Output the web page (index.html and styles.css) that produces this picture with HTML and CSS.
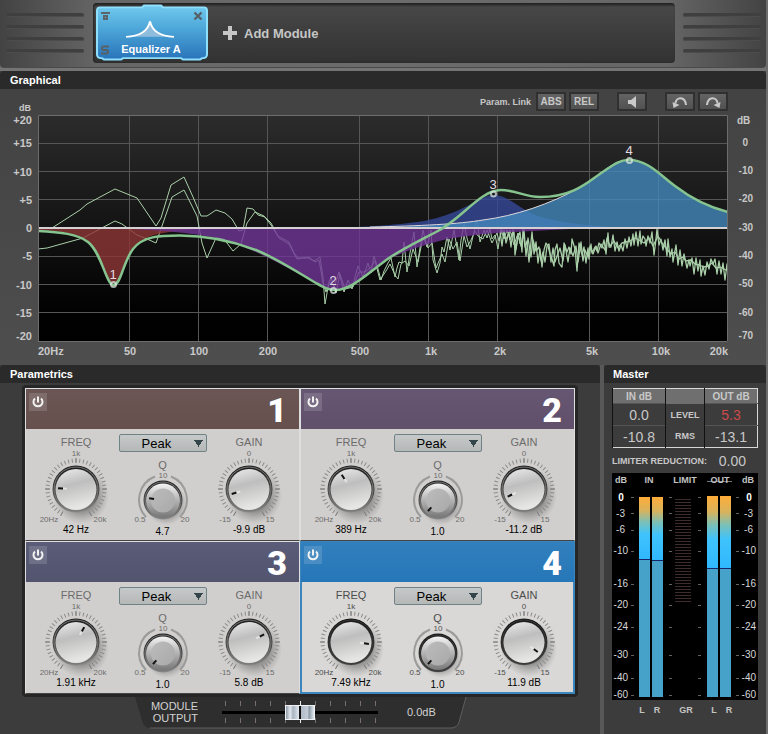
FILE: index.html
```html
<!DOCTYPE html>
<html lang="en">
<head>
<meta charset="utf-8">
<meta name="viewport" content="width=device-width, initial-scale=1">
<title>Equalizer A</title>
<link rel="stylesheet" href="styles.css">
</head>
<body>
<svg class="defs" aria-hidden="true">
  <defs>
    <linearGradient id="capBig" x1="0" y1="0" x2="0.25" y2="1"><stop offset="0" stop-color="#ececec"/><stop offset=".45" stop-color="#bebebe"/><stop offset="1" stop-color="#e6e6e4"/></linearGradient>
    <linearGradient id="ringBig" x1="0" y1="0" x2="0" y2="1"><stop offset="0" stop-color="#1c1c1c"/><stop offset=".6" stop-color="#4a4a4a"/><stop offset="1" stop-color="#8c8c8c"/></linearGradient>
    <linearGradient id="rimSmall" x1="0" y1="0" x2="0" y2="1"><stop offset="0" stop-color="#f4f4f4"/><stop offset=".5" stop-color="#b2b2b2"/><stop offset="1" stop-color="#777"/></linearGradient>
    <linearGradient id="capSmall" x1="0" y1="0" x2="1" y2="1"><stop offset="0" stop-color="#bcbcbc"/><stop offset="1" stop-color="#a9a9a9"/></linearGradient>
    <radialGradient id="shade"><stop offset=".5" stop-color="#555" stop-opacity=".6"/><stop offset="1" stop-color="#777" stop-opacity="0"/></radialGradient>
    <symbol id="dial" viewBox="0 0 80 76">
      <circle cx="45" cy="48" r="28" fill="url(#shade)"/>
      <path d="M25.75 65.68A28.5 28.5 0 1 1 54.25 65.68" fill="none" stroke="#8a8a8a" stroke-width="4" pathLength="300" stroke-dasharray="2 5.5" stroke-dashoffset="1"/>
      <path d="M9 41h5M66 41h5M40 10v5M24.5 68l2.5-4.5M55.5 68l-2.5-4.5" stroke="#7c7c7c"/>
      <circle cx="40" cy="41" r="23.5" fill="url(#ringBig)"/>
      <circle cx="40" cy="41" r="22" fill="none" stroke="#777"/>
      <circle cx="40" cy="41.5" r="20.5" fill="url(#capBig)"/>
    </symbol>
    <symbol id="dialSmall" viewBox="0 0 80 54">
      <circle cx="43" cy="33" r="21" fill="url(#shade)"/>
      <path d="M23 46A25 25 0 0 1 32 5.5M48 5.5A25 25 0 0 1 57 46" fill="none" stroke="#9b9b9b" stroke-width="2"/>
      <circle cx="40" cy="29" r="19.5" fill="url(#ringBig)"/>
      <circle cx="40" cy="29" r="18" fill="none" stroke="#7b7b7b"/>
      <circle cx="40" cy="29.5" r="17" fill="url(#rimSmall)"/>
      <circle cx="40" cy="29.5" r="12" fill="url(#capSmall)"/>
    </symbol>
    <symbol id="power" viewBox="0 0 18 18">
      <path d="M6 5.5a4.500 4.500 0 1 0 6 0M9 3.5v6" fill="none" stroke="#f2f2f2" stroke-width="2"/>
    </symbol>
  </defs>
</svg>

<div class="app">
  <header class="rack">
    <div class="grille"><i></i><i></i><i></i><i></i></div>
    <div class="slots">
      <div class="module">
        <svg class="module-art" viewBox="0 0 114 60" preserveAspectRatio="none" aria-hidden="true">
          <defs><linearGradient id="tile" x1="0" y1="0" x2="0" y2="1"><stop offset="0" stop-color="#72caee"/><stop offset=".4" stop-color="#4fa9da"/><stop offset="1" stop-color="#2873b9"/></linearGradient></defs>
          <path d="M5 3.500H47L49 1.500H66L68 3.500H109Q112 3.500 112 7V52Q112 56 108 56H107L105 57.500H88L86 56H28L26 57.500H9L7 56H6Q2 56 2 52V7Q2 3.500 5 3.500Z" fill="url(#tile)" stroke="#8ee0fc" stroke-width="2"/>
          <path d="M31 34Q51 33 55 18Q59 33 79 34Z" fill="#8ebcdc"/>
          <path d="M31 34Q52 33 55 18Q58 33 79 34" fill="none" stroke="#fff" stroke-width="2"/>
        </svg>
        <button class="mini mini-bypass" aria-label="Bypass"><svg viewBox="0 0 10 10"><path d="M1 1h9v2H1zM3 4h5v5H3zM5 6v1h1V6z" fill="#5b6469" fill-rule="evenodd"/></svg></button>
        <button class="mini mini-close" aria-label="Remove module"><svg viewBox="0 0 10 10"><path d="M1.500 1.500l7 7M8.500 1.500l-7 7" stroke="#566168" stroke-width="2.400"/></svg></button>
        <button class="mini mini-solo" aria-label="Solo"><svg viewBox="0 0 10 10"><path d="M9 1.500H3L2 2.500V4L3 5H7L8 6V7.500L7 8.500H1" fill="none" stroke="#566168" stroke-width="2"/></svg></button>
        <span class="module-name">Equalizer A</span>
      </div>
      <button class="add"><svg viewBox="0 0 14 14" aria-hidden="true"><path d="M5 0h4v5h5v4H9v5H5V9H0V5h5z" fill="#c6c6c6"/></svg>Add Module</button>
    </div>
    <div class="grille"><i></i><i></i><i></i><i></i></div>
  </header>

  <section class="panel graphical">
    <h2>Graphical</h2>
    <div class="toolbar">
      <span class="unit">dB</span>
      <span class="link-label">Param. Link</span>
      <button>ABS</button>
      <button>REL</button>
      <button class="speaker" aria-label="Preview"><svg viewBox="0 0 24 14"><path d="M8 5h3l5-4v12l-5-4H8z" fill="#c9c9c9"/></svg></button>
      <button aria-label="Undo"><svg viewBox="0 0 24 14"><path d="M7.500 8.500C8 1.500 17 1 18 10" fill="none" stroke="#c9c9c9" stroke-width="2"/><path d="M4.500 7l7 3-6 3z" fill="#c9c9c9"/></svg></button>
      <button aria-label="Redo"><svg viewBox="0 0 24 14"><path d="M16.500 8.500C16 1.500 7 1 6 10" fill="none" stroke="#c9c9c9" stroke-width="2"/><path d="M19.500 7l-7 3 6 3z" fill="#c9c9c9"/></svg></button>
    </div>
    <div class="plot">
      <ol class="axis axis-left"><li>+20</li><li>+15</li><li>+10</li><li>+5</li><li>0</li><li>-5</li><li>-10</li><li>-15</li><li>-20</li></ol>
      <svg class="graph" viewBox="38 115 690 227" role="img" aria-label="Equalizer response and spectrum">
        <defs><linearGradient id="screen" x1="0" y1="0" x2="0" y2="1"><stop offset="0" stop-color="#2c2c2c"/><stop offset=".5" stop-color="#131313"/><stop offset=".85" stop-color="#020202"/><stop offset="1" stop-color="#000"/></linearGradient></defs>
        <rect x="38" y="115" width="690" height="227" fill="url(#screen)"/>
        <path d="M38 143.500H728M38 171.500H728M38 199.500H728M38 256.500H728M38 284.500H728M38 312.500H728M129.500 115V342M198.500 115V342M267.500 115V342M359.500 115V342M428.500 115V342M497.500 115V342M589.500 115V342M658.500 115V342" stroke="#565656" fill="none"/>
        <g fill="none" stroke="#a9cfa9" stroke-linejoin="round">
          <path d="M38 228L52 228L80 210L87 204L115 189L137 198L156 226L161 218L171 185L184 177L193 197L201 216L207 216L216 210L225 213L232 219L239 231L243 230L247 208L253 209L258 215L265 217L271 223L278 236L289 242L294 253L298 258L308 258L314 261L320 257L323 277L325 304L329 282L331 277L334 288L339 272L344 292L348 280L352 289L355 277L358 266L363 277L368 263L371 273L374 256L378 269L381 280L384 271L388 263L391 258L395 277L397 268L399 262L402 263L404 242L407 272L410 253L414 232L417 267L420 248L423 230L427 247L431 230L433 260L437 273L440 263L442 247L444 252L447 237L450 250L454 230L459 260L461 240L464 224L467 238L470 249L474 232L477 220L480 242L484 230L487 238L490 229L492 239L495 235L498 249L501 229L504 239L507 230L510 240L512 233"/>
          <path d="M38 249L47 248L83 238L100 229L115 221L122 224L137 235L147 239L156 243L162 226L172 197L184 190L197 216L202 243L207 258L216 238L224 239L233 251L241 244L247 223L255 212L264 216L271 225L279 238L289 244L297 259L309 257L315 262L319 260L323 283L326 292L331 278L336 293L340 274L345 289L353 287L359 272L365 272L372 266L375 261L380 280L386 271L390 264L395 275L398 279L401 264L405 261L409 266L413 249L418 262L423 237L428 248L432 243L436 268L442 254L445 262L449 239L453 249L457 242L460 261L464 236L467 247L471 240L475 231L478 236L483 239L487 230L492 243L497 233L499 241L502 230L506 239L510 230L514 245L518 233L520 244"/>
          <path stroke-width="1.300" d="M512 235L514 232L515 255L518 237L520 232L522 252L523 229L525 247L527 241L529 262L532 232L534 254L536 242L538 263L540 249L542 267L544 250L546 243L548 246L550 254L552 259L554 266L555 250L557 244L559 263L561 266L562 267L564 243L567 252L569 247L571 254L572 239L575 249L577 271L579 243L582 255L584 247L586 263L588 248L589 259L591 244L592 253L595 247L597 251L599 243L602 248L604 240L606 254L608 233L609 247L611 247L613 235L615 251L617 242L619 251L621 245L623 251L625 239L627 248L629 237L631 246L633 234L634 245L636 232L638 246L640 231L641 244L643 236L645 239L646 246L648 236L650 243L652 232L654 255L656 239L657 229L659 245L661 239L663 250L665 240L667 256L668 239L670 257L672 249L673 262L676 245L678 265L680 250L682 266L684 254L687 268L689 260L690 266L692 258L694 274L696 258L698 271L700 260L701 276L703 266L705 275L707 262L709 269L711 259L713 264L715 259L717 274L719 261L721 274L723 263L725 280L727 264L728 274"/>
          <path stroke-width="1.300" d="M500 231L502 246L504 230L506 243L509 232L511 247L513 230L516 249L518 234L521 246L524 230L526 256L528 238L531 257L533 240L536 251L539 247L541 261L543 252L545 262L547 246L549 244L551 262L553 248L555 262L557 256L560 248L563 261L565 245L568 262L570 248L573 256L576 246L578 262L581 242L583 261L585 250L588 257L590 246L593 254L596 246L598 253L601 244L605 250L607 238L610 246L614 241L618 248L622 243L626 242L630 241L635 238L639 240L644 243L649 238L653 246L658 236L662 243L666 248L671 254L675 252L679 259L683 257L686 261L691 260L695 264L699 265L704 267L708 266L712 263L716 268L720 267L724 269L728 271"/>
        </g>
        <path d="M38 228V230C60 231 78 233 88 241C102 252 106 284 113.500 284C121 284 123 261 133 248C142 237 155 234 175 231L205 228Z" fill="#8f3636" fill-opacity=".8"/>
        <path d="M110 228C160 230 200 233 228 241C256 250 300 274 316 283C323 287 328 290 335 290C352 290 372 269 389 259C405 251 430 243 443 240C465 236 490 233 512 232L590 228Z" fill="#713696" fill-opacity=".8"/>
        <path d="M340 228C400 225 425 222 440 217C468 209 482 195 494 195C510 195 522 213 545 218C565 223 590 226 625 228Z" fill="#344898" fill-opacity=".8"/>
        <path d="M370 228C420 226 460 224 483 220C515 216 550 204 579 188C605 173 612 160 629 160C648 160 660 175 675 186C692 199 708 207 728 212V228Z" fill="#4388bd" fill-opacity=".8"/>
        <path d="M370 227C420 226 460 224 483 220C515 216 550 204 579 188C605 173 612 160 629 160" fill="none" stroke="#ded9dc"/>
        <path d="M38 228H728" stroke="#d5d0d4" stroke-width="2"/>
        <path d="M38 231C60 232 78 234 88 242C102 253 106 285 113.500 285C121 285 123 262 133 249C143 236 160 235.500 180 235.500C205 235.500 232 241 256 250C280 260 300 274 316 283C323 287 328 290 335 290C352 290 368 273 389 258C406 247 424 238.500 436 232C462 219 480 190 501 190C516 190 524 197 540 197C575 197 590 180 602 172.500C612 166 618 160 629 160C648 160 660 175 675 186C692 199 708 207 728 212" fill="none" stroke="#86c48f" stroke-width="2.500"/>
        <g fill="none" stroke="#dce8e0" stroke-opacity=".75" stroke-width="2"><circle cx="113.500" cy="284.500" r="2.500"/><circle cx="333.500" cy="290.500" r="2.500"/><circle cx="493.500" cy="194" r="2.500"/><circle cx="629.500" cy="160.500" r="2.500"/></g>
        <g class="nodes"><text x="113" y="279">1</text><text x="333" y="285">2</text><text x="493" y="189">3</text><text x="629" y="155">4</text></g>
        <path d="M38.500 342V115.500H727.500V341.500H38" fill="none" stroke="#6d6d6d"/>
      </svg>
      <div class="axis-side">
        <span class="unit-right">dB</span>
        <ol class="axis axis-right"><li>0</li><li>-10</li><li>-20</li><li>-30</li><li>-40</li><li>-50</li><li>-60</li><li>-70</li></ol>
      </div>
      <ol class="axis-bottom"><li>20Hz</li><li>50</li><li>100</li><li>200</li><li>500</li><li>1k</li><li>2k</li><li>5k</li><li>10k</li><li>20k</li></ol>
    </div>
  </section>

  <div class="lower">
    <section class="panel parametrics">
      <h2>Parametrics</h2>
      <div class="bands">
        <article class="band band-1">
          <header><button class="power" aria-label="Band 1 power"><svg><use href="#power"/></svg></button><h3>1</h3></header>
          <div class="controls">
            <div class="knob"><label for="f1">FREQ</label><svg viewBox="0 0 80 76"><use href="#dial"/><path class="mark" transform="rotate(-88 40 41)" d="M40 23v5"/><path class="glow" transform="rotate(-88 40 41)" d="M40 28v4"/><text x="40" y="8">1k</text><text x="13" y="74">20Hz</text><text x="64" y="74">20k</text></svg><input type="range" id="f1" min="20" max="20000" value="42"><output for="f1">42 Hz</output></div>
            <div class="knob mid"><select aria-label="Band 1 type"><option>Peak</option></select><label for="q1">Q</label><svg viewBox="0 0 80 54"><use href="#dialSmall"/><path class="mark" transform="rotate(-83 40 29)" d="M40 15v5"/><text x="40" y="7">10</text><text x="17" y="51">0.5</text><text x="62" y="51">20</text></svg><input type="range" id="q1" min="0.5" max="20" step="0.1" value="4.7"><output for="q1">4.7</output></div>
            <div class="knob"><label for="g1">GAIN</label><svg viewBox="0 0 80 76"><use href="#dial"/><path class="mark" transform="rotate(-106 40 41)" d="M40 23v5"/><path class="glow" transform="rotate(-106 40 41)" d="M40 28v4"/><text x="40" y="8">0</text><text x="16" y="74">-15</text><text x="61" y="74">15</text></svg><input type="range" id="g1" min="-15" max="15" step="0.1" value="-9.9"><output for="g1">-9.9 dB</output></div>
          </div>
        </article>
        <article class="band band-2">
          <header><button class="power" aria-label="Band 2 power"><svg><use href="#power"/></svg></button><h3>2</h3></header>
          <div class="controls">
            <div class="knob"><label for="f2">FREQ</label><svg viewBox="0 0 80 76"><use href="#dial"/><path class="mark" transform="rotate(-33 40 41)" d="M40 24v5"/><path class="glow" transform="rotate(-33 40 41)" d="M40 29v4"/><text x="40" y="8">1k</text><text x="13" y="74">20Hz</text><text x="64" y="74">20k</text></svg><input type="range" id="f2" min="20" max="20000" value="389"><output for="f2">389 Hz</output></div>
            <div class="knob mid"><select aria-label="Band 2 type"><option>Peak</option></select><label for="q2">Q</label><svg viewBox="0 0 80 54"><use href="#dialSmall"/><path class="mark" transform="rotate(-138 40 29)" d="M40 14v5"/><text x="40" y="7">10</text><text x="17" y="51">0.5</text><text x="62" y="51">20</text></svg><input type="range" id="q2" min="0.5" max="20" step="0.1" value="1"><output for="q2">1.0</output></div>
            <div class="knob"><label for="g2">GAIN</label><svg viewBox="0 0 80 76"><use href="#dial"/><path class="mark" transform="rotate(-115 40 41)" d="M40 23v5"/><path class="glow" transform="rotate(-115 40 41)" d="M40 28v4"/><text x="40" y="8">0</text><text x="16" y="74">-15</text><text x="61" y="74">15</text></svg><input type="range" id="g2" min="-15" max="15" step="0.1" value="-11.2"><output for="g2">-11.2 dB</output></div>
          </div>
        </article>
        <article class="band band-3">
          <header><button class="power" aria-label="Band 3 power"><svg><use href="#power"/></svg></button><h3>3</h3></header>
          <div class="controls">
            <div class="knob"><label for="f3">FREQ</label><svg viewBox="0 0 80 76"><use href="#dial"/><path class="mark" transform="rotate(29 40 41)" d="M40 24v5"/><path class="glow" transform="rotate(29 40 41)" d="M40 29v4"/><text x="40" y="8">1k</text><text x="13" y="74">20Hz</text><text x="64" y="74">20k</text></svg><input type="range" id="f3" min="20" max="20000" value="1910"><output for="f3">1.91 kHz</output></div>
            <div class="knob mid"><select aria-label="Band 3 type"><option>Peak</option></select><label for="q3">Q</label><svg viewBox="0 0 80 54"><use href="#dialSmall"/><path class="mark" transform="rotate(-138 40 29)" d="M40 14v5"/><text x="40" y="7">10</text><text x="17" y="51">0.5</text><text x="62" y="51">20</text></svg><input type="range" id="q3" min="0.5" max="20" step="0.1" value="1"><output for="q3">1.0</output></div>
            <div class="knob"><label for="g3">GAIN</label><svg viewBox="0 0 80 76"><use href="#dial"/><path class="mark" transform="rotate(63 40 41)" d="M40 24v5"/><path class="glow" transform="rotate(63 40 41)" d="M40 29v4"/><text x="40" y="8">0</text><text x="16" y="74">-15</text><text x="61" y="74">15</text></svg><input type="range" id="g3" min="-15" max="15" step="0.1" value="5.8"><output for="g3">5.8 dB</output></div>
          </div>
        </article>
        <article class="band band-4">
          <header><button class="power" aria-label="Band 4 power"><svg><use href="#power"/></svg></button><h3>4</h3></header>
          <div class="controls">
            <div class="knob"><label for="f4">FREQ</label><svg viewBox="0 0 80 76"><use href="#dial"/><circle class="focus" cx="40" cy="41" r="22"/><path class="mark" transform="rotate(96 40 41)" d="M40 23v5"/><path class="glow" transform="rotate(96 40 41)" d="M40 28v4"/><text x="40" y="8">1k</text><text x="13" y="74">20Hz</text><text x="64" y="74">20k</text></svg><input type="range" id="f4" min="20" max="20000" value="7490"><output for="f4">7.49 kHz</output></div>
            <div class="knob mid"><select aria-label="Band 4 type"><option>Peak</option></select><label for="q4">Q</label><svg viewBox="0 0 80 54"><use href="#dialSmall"/><circle class="focus" cx="40" cy="29" r="18"/><path class="mark" transform="rotate(-138 40 29)" d="M40 14v5"/><text x="40" y="7">10</text><text x="17" y="51">0.5</text><text x="62" y="51">20</text></svg><input type="range" id="q4" min="0.5" max="20" step="0.1" value="1"><output for="q4">1.0</output></div>
            <div class="knob"><label for="g4">GAIN</label><svg viewBox="0 0 80 76"><use href="#dial"/><circle class="focus" cx="40" cy="41" r="22"/><path class="mark" transform="rotate(126 40 41)" d="M40 24v5"/><path class="glow" transform="rotate(126 40 41)" d="M40 29v4"/><text x="40" y="8">0</text><text x="16" y="74">-15</text><text x="61" y="74">15</text></svg><input type="range" id="g4" min="-15" max="15" step="0.1" value="11.9"><output for="g4">11.9 dB</output></div>
          </div>
        </article>
      </div>
      <div class="output">
        <svg class="output-shape" viewBox="0 0 332 33" preserveAspectRatio="none" aria-hidden="true"><path d="M0 0H331L324 26Q322 32 316 32H15Q10 32 8 27Z" fill="#2e2e2e"/><path d="M331 0L324 26Q322 32 316 32H15" fill="none" stroke="#606060"/></svg>
        <label for="out">MODULE OUTPUT</label>
        <div class="fader">
          <svg viewBox="0 0 156 24" aria-hidden="true"><path d="M3.500 1v5M18.500 1v5M33.500 1v5M48.500 1v5M63.500 1v5M93.500 1v5M108.500 1v5M123.500 1v5M138.500 1v5M153.500 1v5M3.500 18v5M18.500 18v5M33.500 18v5M48.500 18v5M63.500 18v5M93.500 18v5M108.500 18v5M123.500 18v5M138.500 18v5M153.500 18v5" stroke="#7b6f6c"/><path d="M78.500 1v22" stroke="#eee"/></svg>
          <input type="range" id="out" min="-20" max="20" value="0">
        </div>
        <output for="out">0.0dB</output>
      </div>
    </section>

    <section class="panel master">
      <h2>Master</h2>
      <table>
        <thead><tr><th>IN dB</th><th></th><th>OUT dB</th></tr></thead>
        <tbody>
          <tr><td>0.0</td><th scope="row">LEVEL</th><td class="over">5.3</td></tr>
          <tr><td>-10.8</td><th scope="row">RMS</th><td>-13.1</td></tr>
        </tbody>
      </table>
      <p class="limiter"><span>LIMITER REDUCTION:</span><output>0.00</output></p>
      <svg class="meters" viewBox="612 473 146 246" role="img" aria-label="Level meters">
        <defs>
          <linearGradient id="hot" x1="0" y1="0" x2="0" y2="1"><stop offset="0" stop-color="#ffac38"/><stop offset=".22" stop-color="#d8b35c"/><stop offset=".4" stop-color="#7cc0b6"/><stop offset=".6" stop-color="#3fc3fc"/><stop offset="1" stop-color="#30b8ff"/></linearGradient>
          <pattern id="slats" x="675" y="499" width="16" height="3" patternUnits="userSpaceOnUse"><path d="M0 .5h16" stroke="#3d2c2c"/></pattern>
        </defs>
        <rect x="612" y="473" width="146" height="227" fill="#000"/>
        <g fill="#46a2c8"><path d="M639 555h11v142h-11zM652 555h11v142h-11zM707 565h11v132h-11zM720 565h11v132h-11z"/></g>
        <g fill="url(#hot)"><rect x="639" y="497" width="11" height="62"/><rect x="652" y="497" width="11" height="63"/><rect x="707" y="496" width="11" height="72"/><rect x="720" y="496" width="11" height="72"/></g>
        <path d="M639 559.500h11M652 560.500h11M707 568.500h11M720 568.500h11" stroke="#17246c"/>
        <rect x="675" y="499" width="16" height="105" fill="url(#slats)"/>
        <path stroke="#636363" stroke-width="3" d="M632.500 497v1M670.500 497v1M699.500 497v1M737.500 497v1M632.500 513v1M670.500 513v1M699.500 513v1M737.500 513v1M632.500 530v1M670.500 530v1M699.500 530v1M737.500 530v1M632.500 551v1M670.500 551v1M699.500 551v1M737.500 551v1M632.500 584v1M670.500 584v1M699.500 584v1M737.500 584v1M632.500 605v1M670.500 605v1M699.500 605v1M737.500 605v1M632.500 627v1M670.500 627v1M699.500 627v1M737.500 627v1M632.500 655v1M670.500 655v1M699.500 655v1M737.500 655v1M632.500 678v1M670.500 678v1M699.500 678v1M737.500 678v1M632.500 695v1M670.500 695v1M699.500 695v1M737.500 695v1"/>
        <path d="M707 481.500h25" stroke="#777"/>
        <g class="meter-title"><text x="621" y="483">dB</text><text x="649" y="483">IN</text><text x="685" y="483">LIMIT</text><text x="720" y="483">OUT</text><text x="748" y="483">dB</text></g>
        <g class="scale"><text class="zero" x="621" y="501">0</text><text x="625" y="517" class="end">-3</text><text x="625" y="533" class="end">-6</text><text x="628" y="554" class="end">-10</text><text x="628" y="587" class="end">-16</text><text x="628" y="608" class="end">-20</text><text x="628" y="630" class="end">-24</text><text x="628" y="658" class="end">-30</text><text x="628" y="681" class="end">-40</text><text x="628" y="698" class="end">-60</text>
        <text class="zero" x="749" y="501">0</text><text x="753" y="517" class="end">-3</text><text x="753" y="533" class="end">-6</text><text x="756" y="554" class="end">-10</text><text x="756" y="587" class="end">-16</text><text x="756" y="608" class="end">-20</text><text x="756" y="630" class="end">-24</text><text x="756" y="658" class="end">-30</text><text x="756" y="681" class="end">-40</text><text x="756" y="698" class="end">-60</text></g>
        <g class="meter-title"><text x="642" y="713">L</text><text x="657" y="713">R</text><text x="686" y="713">GR</text><text x="714" y="713">L</text><text x="729" y="713">R</text></g>
      </svg>
    </section>
  </div>
</div>
</body>
</html>
```
FILE: styles.css
```css
* { box-sizing: border-box; }
body {
  margin: 0;
  background: #5c5c5c;
  color: #c8c8c8;
  font-family: "Liberation Sans", Arial, sans-serif;
  font-size: 11px;
}
h2, h3, ol, p { margin: 0; padding: 0; list-style: none; }
button { font: inherit; color: inherit; border: 0; padding: 0; background: none; cursor: pointer; }
svg { display: block; }
.defs { position: absolute; width: 0; height: 0; }
.app {
  min-height: 100vh;
  display: flex;
  flex-direction: column;
  border-right: 2px solid #6d6d6d;
  background: #747474;
}

/* Module rack */
.rack {
  display: flex;
  align-items: flex-start;
  gap: 8px;
  height: 68px;
  margin-bottom: 3px;
  padding: 3px 5px 0 6px;
  border-radius: 0 0 4px 4px;
  border-bottom: 1px solid #4a4a4a;
  background: linear-gradient(90deg, #434343, #666 13%, #6c6c6c 50%, #666 87%, #434343);
}
.grille { flex: none; width: 78px; padding-top: 10px; display: grid; gap: 8px; }
.grille i { height: 4px; border-radius: 2px; background: #3f3f3f; border-bottom: 1px solid #4c4c4c; }
.slots {
  flex: 1;
  margin-left: 1px;
  height: 60px;
  display: flex;
  align-items: center;
  gap: 14px;
  padding-left: 2px;
  border-radius: 4px;
  background: linear-gradient(#1f1f1f, #474747 7%, #323232);
  box-shadow: inset 1px 0 2px #222;
}
.module { position: relative; width: 114px; height: 58px; display: flex; align-items: flex-end; justify-content: center; }
.module-art { position: absolute; inset: 0; width: 100%; height: 100%; }
.module-name { position: relative; padding: 0 2px 7px 0; font-weight: bold; line-height: 12px; color: #fff; }
.mini { position: absolute; width: 10px; height: 10px; }
.mini svg { width: 10px; height: 10px; }
.mini-bypass { left: 5px; top: 7px; }
.mini-close { right: 6px; top: 7px; }
.mini-solo { left: 5px; bottom: 7px; }
.add { display: flex; align-items: center; gap: 7px; font-size: 13px; font-weight: bold; color: #c6c6c6; }
.add svg { width: 14px; height: 14px; }

/* Panels */
.panel > h2 {
  height: 18px;
  padding-left: 10px;
  border-radius: 4px 4px 0 0;
  background: #2a2a2a;
  color: #fff;
  font-size: 11px;
  line-height: 18px;
}
.graphical { background: linear-gradient(#424242, #4e4e4e); }
.toolbar {
  display: flex;
  align-items: flex-start;
  gap: 3px;
  height: 26px;
  padding: 3px 38px 0 0;
  font-size: 10px;
  font-weight: bold;
}
.toolbar .unit { align-self: flex-end; width: 31px; margin-right: auto; text-align: right; line-height: 14px; font-size: 9px; }
.toolbar .link-label { margin-right: 2px; font-size: 9px; line-height: 20px; }
.toolbar button {
  width: 30px;
  height: 19px;
  border: 2px solid #303030;
  background: linear-gradient(#636363, #515151);
  line-height: 15px;
}
.toolbar button.speaker { margin: 0 15px; }
.toolbar button svg { width: 24px; height: 14px; margin: auto; }
.plot {
  display: grid;
  grid-template-columns: 38px 1fr 38px;
  font-size: 11px;
  font-weight: bold;
}
.graph { width: 100%; height: auto; }
.nodes { font-size: 13px; font-weight: normal; fill: #e2dce2; text-anchor: middle; }
.axis { display: flex; flex-direction: column; }
.axis li { flex: 2; display: flex; align-items: center; justify-content: flex-end; line-height: 10px; padding-bottom: 1px; }
.axis-left { padding-right: 6px; }
.axis-left li:first-child { flex: 1; align-items: flex-start; }
.axis li:last-child { flex: 1; align-items: flex-end; }
.axis-side { display: flex; flex-direction: column; font-size: 10px; }
.unit-right { height: 14px; padding-left: 9px; line-height: 12px; }
.axis-right { flex: 1; width: 32px; padding-right: 7px; }
.axis-right li:first-child { padding-right: 5px; }
.axis-bottom {
  grid-column: 2;
  display: grid;
  grid-template-columns: 58fr 68fr 70fr 68fr 116fr 26fr 112fr 72fr 66fr 34fr;
  height: 23px;
  line-height: 19px;
  text-align: center;
}
.axis-bottom li:first-child { text-align: left; }
.axis-bottom li:last-child { text-align: right; }

.lower { flex: 1; display: grid; grid-template-columns: 1fr 162px; gap: 4px; background: #585858; }
.parametrics, .master { background: #3c3c3c; }

/* Bands */
.bands {
  display: grid;
  grid-template-columns: 1fr 1fr;
  margin: 2px 22px 0;
  padding: 3px;
  border-radius: 4px;
  background: #262626;
}
.band { border: 1px solid #dedede; border-bottom-color: #444; background: #d1cfcd; color: #000; }
.band > header {
  display: flex;
  justify-content: space-between;
  height: 40px;
  padding: 4px 12px 0 3px;
}
.band-1 > header { background: linear-gradient(#6a5654, #66504e); }
.band-2 > header { background: linear-gradient(#665772, #614f6b); }
.band-3 > header { background: linear-gradient(#5a5c78, #53556f); }
.band-4 > header { background: linear-gradient(#327fbd, #2677b8); }
.band-4 { border: 1px solid #3a86bf; box-shadow: inset 0 0 0 1px #3a86bf; background: #d9d8d7; }
.band h3 { font-family: Roboto, Inter, sans-serif; font-size: 34px; font-weight: 900; line-height: 34px; color: #fff; }
.power { width: 18px; height: 18px; background: rgba(255, 255, 255, .14); }
.power svg { width: 18px; height: 18px; }
.controls {
  display: grid;
  grid-template-columns: 80px 1fr 80px;
  height: 111px;
  padding: 7px 10px 0;
}
.knob { position: relative; display: flex; flex-direction: column; align-items: center; }
.knob label { font-size: 11px; line-height: 12px; color: #6c6c6c; }
.knob svg { width: 80px; flex: none; }
.knob text { font-size: 8px; fill: #6c6c6c; text-anchor: middle; }
.knob output { font-size: 10px; line-height: 12px; }
.knob input { position: absolute; left: 12px; right: 12px; bottom: 26px; height: 42px; margin: 0; opacity: 0; }
.mark { stroke: #111; stroke-width: 2; }
.glow { stroke: #efefef; stroke-width: 2; stroke-opacity: .7; }
.focus { fill: none; stroke: #000; stroke-width: 2; stroke-opacity: .5; }
.band-4 label, .band-4 .knob text { color: #4c4c4c; fill: #4c4c4c; }
.mid select {
  appearance: none;
  width: 88px;
  height: 18px;
  margin: -2px 0 7px;
  padding: 0 0 0 22px;
  border: 1px solid #6f8286;
  border-radius: 2px;
  background:
    conic-gradient(from -32deg at 50% 100%, #34464a 64deg, transparent 0) 74px 5px / 9px 7px no-repeat,
    linear-gradient(#c6c9c9, #b6b8b8);
  font: 13px "Liberation Sans", Arial, sans-serif;
  color: #000;
}
.mid output { margin-top: 1px; }

/* Module output fader */
.output {
  position: relative;
  display: flex;
  align-items: center;
  width: 332px;
  height: 32px;
  margin: 0 auto 0 135px;
  padding-bottom: 2px;
  color: #d2d2d2;
}
.output-shape { position: absolute; inset: 0; width: 100%; height: 100%; }
.output label { position: relative; width: 63px; margin-right: 24px; font-size: 11px; line-height: 12px; text-align: right; }
.fader { position: relative; width: 156px; height: 24px; }
.fader input { appearance: none; position: absolute; inset: 0; width: 156px; height: 24px; margin: 0; background: none; }
.fader input::-webkit-slider-runnable-track { height: 3px; background: #000; }
.fader input::-webkit-slider-thumb {
  appearance: none;
  width: 30px;
  height: 15px;
  margin-top: -6px;
  border: 1px solid #eef2f5;
  background: linear-gradient(90deg, #8c9aa6, #e3e8ee 15%, #a9b4c0 25%, #dfe5ea 45%, #111 46%, #111 54%, #b1bcc8 55%, #c4ccd6 78%, #8796a4 82%, #e6ebf0);
}
.output output { position: relative; margin-left: 29px; }

/* Master */
.master > h2 { padding-left: 9px; }
.master table { width: 146px; margin: 5px 8px 0; border-collapse: collapse; border: 1px solid #d8d8d8; table-layout: fixed; }
.master th, .master td { padding: 0; text-align: center; border-left: 1px solid #111; }
.master th { width: 39px; font-size: 9px; }
.master thead th { width: auto; height: 15px; font-size: 10px; background: #6f6f6f; }
.master thead th:nth-child(2) { width: 39px; }
.master td { height: 22px; font-size: 14px; border-top: 1px solid #555; }
.master td.over { color: #cb4b4b; }
.limiter { display: flex; align-items: center; justify-content: space-between; height: 25px; padding: 0 20px 0 8px; font-size: 9px; font-weight: bold; white-space: nowrap; }
.limiter output { font-size: 14px; font-weight: normal; }
.meters { width: 146px; margin: 0 8px; }
.meter-title, .scale { font-size: 9px; font-weight: bold; fill: #c4c4c4; text-anchor: middle; }
.scale { font-size: 10px; }
.scale .end { text-anchor: end; font-weight: normal; fill: #d8d8d8; }
.scale .zero { fill: #fff; }
```
